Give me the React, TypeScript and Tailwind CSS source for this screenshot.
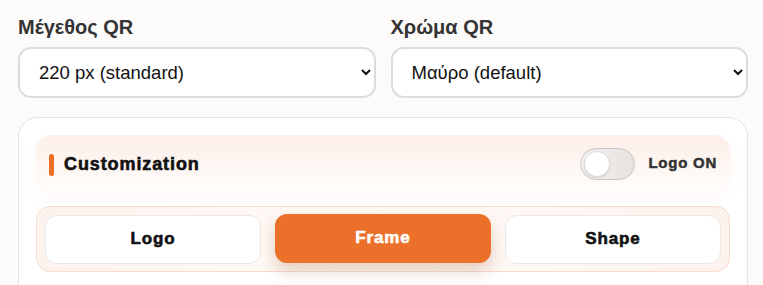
import React from "react";

export default function App() {
  return (
    <div className="h-[285px] w-[763px] overflow-hidden bg-[#fcfbfa] pl-[18px] pr-[15px] pt-[13px] font-['Liberation_Sans',Arial,sans-serif]">
      <div className="grid grid-cols-2 gap-[15px]">
        <div className="flex flex-col">
          <label className="mb-[6px] text-[20px] font-bold leading-[28px] text-[#333]">Μέγεθος QR</label>
          <select className="h-[51px] w-full rounded-[13px] border-2 border-[#dedcdb] bg-white pl-[15px] pr-[2px] text-[18.5px] text-[#111] outline-none">
            <option>220 px (standard)</option>
          </select>
        </div>
        <div className="flex flex-col">
          <label className="mb-[6px] text-[20px] font-bold leading-[28px] text-[#333]">Χρώμα QR</label>
          <select className="h-[51px] w-full rounded-[13px] border-2 border-[#dedcdb] bg-white pl-[15px] pr-[2px] text-[18.5px] text-[#111] outline-none">
            <option>Μαύρο (default)</option>
          </select>
        </div>
      </div>

      <div className="mt-[19px] h-[200px] rounded-[20px] border border-[#e6e4e2] bg-white px-[17px] pt-[17px]">
        <div className="flex h-[57px] items-center justify-between rounded-[16px] bg-[linear-gradient(to_bottom,#fcefe8,#fffdfc)] pl-[13px] pr-[13px] shadow-[0_6px_14px_rgba(240,200,180,0.12)]">
          <div className="flex items-center gap-[10px]">
            <span className="mt-[2px] h-[22px] w-[5px] rounded-full bg-[#ec6d25]" />
            <span className="mt-[2px] text-[18px] font-bold tracking-[0.05em] text-[#111] [-webkit-text-stroke:0.6px_#111]">Customization</span>
          </div>
          <div className="flex items-center gap-[13px]">
            <div className="relative h-[32px] w-[55px] rounded-full border border-[#cbc7c4] bg-[linear-gradient(to_right,#f3f1ef,#e6e2df)]">
              <div className="absolute left-[3px] top-[2px] h-[26px] w-[26px] rounded-full border border-[#e0dcd9] bg-white shadow-[0_1px_2px_rgba(0,0,0,0.12)]" />
            </div>
            <span className="text-[15px] font-bold tracking-[0.05em] text-[#333] [-webkit-text-stroke:0.5px_#333]">Logo ON</span>
          </div>
        </div>

        <div className="mt-[14px] grid h-[66px] grid-cols-3 items-center gap-[14px] rounded-[14px] border border-[#f9dccb] bg-[linear-gradient(to_right,#fdf3ee,#fffaf7,#fdf3ee)] px-[8px]">
          <button className="h-[49px] rounded-[12px] border border-[#ebe8e6] bg-white text-[17px] font-bold tracking-[0.05em] text-[#111] [-webkit-text-stroke:0.6px_#111]">Logo</button>
          <button className="-mt-[2px] h-[49px] rounded-[12px] bg-[#eb7029] text-[17px] font-bold tracking-[0.05em] text-white shadow-[0_8px_16px_rgba(160,80,40,0.25)] [-webkit-text-stroke:0.6px_#fff]">Frame</button>
          <button className="h-[49px] rounded-[12px] border border-[#ebe8e6] bg-white text-[17px] font-bold tracking-[0.05em] text-[#111] [-webkit-text-stroke:0.6px_#111]">Shape</button>
        </div>
      </div>
    </div>
  );
}
